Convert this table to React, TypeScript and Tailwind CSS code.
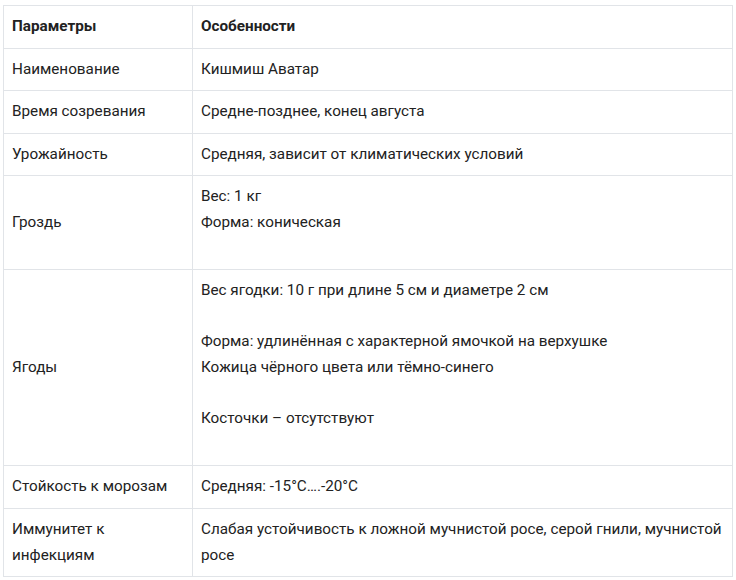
const ROWS: Array<{ param: string; lines: string[] }> = [
  { param: 'Наименование', lines: ['Кишмиш Аватар'] },
  { param: 'Время созревания', lines: ['Средне-позднее, конец августа'] },
  { param: 'Урожайность', lines: ['Средняя, зависит от климатических условий'] },
  { param: 'Гроздь', lines: ['Вес: 1 кг', 'Форма: коническая', ''] },
  {
    param: 'Ягоды',
    lines: [
      'Вес ягодки: 10 г при длине 5 см и диаметре 2 см',
      '',
      'Форма: удлинённая с характерной ямочкой на верхушке',
      'Кожица чёрного цвета или тёмно-синего',
      '',
      'Косточки – отсутствуют',
      '',
    ],
  },
  { param: 'Стойкость к морозам', lines: ['Средняя: -15°C….-20°C'] },
  {
    param: 'Иммунитет к инфекциям',
    lines: ['Слабая устойчивость к ложной мучнистой росе, серой гнили, мучнистой росе'],
  },
];

export default function App() {
  return (
    <div className="min-h-[580px] bg-white pl-[3px] pt-[5px] font-['Roboto',sans-serif] text-[15.25px] leading-[25.6px] text-[#222]">
      <table className="w-[730px] table-fixed border-collapse">
        <colgroup>
          <col className="w-[189px]" />
          <col />
        </colgroup>
        <thead>
          <tr>
            <th className="border border-[#e1e4e8] px-2 py-2 text-left align-middle font-bold">Параметры</th>
            <th className="border border-[#e1e4e8] px-2 py-2 text-left align-middle font-bold">Особенности</th>
          </tr>
        </thead>
        <tbody>
          {ROWS.map((row) => (
            <tr key={row.param}>
              <td className="border border-[#e1e4e8] px-2 py-2 align-middle">{row.param}</td>
              <td className="border border-[#e1e4e8] px-2 py-2 align-top">
                {row.lines.map((line, i) => (
                  <div key={i} className="min-h-[25.6px]">
                    {line}
                  </div>
                ))}
              </td>
            </tr>
          ))}
        </tbody>
      </table>
    </div>
  );
}
